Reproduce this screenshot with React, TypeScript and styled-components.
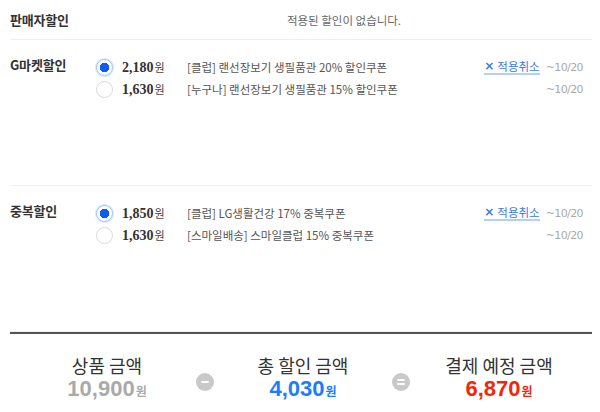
import styled, { createGlobalStyle } from 'styled-components';

const GlobalStyle = createGlobalStyle`
  body {
    margin: 0;
    background: #fff;
    font-family: "Noto Sans CJK KR", "Noto Sans", sans-serif;
    color: #333;
  }
`;

const Wrapper = styled.div`
  width: 582px;
  padding: 0 8px 0 10px;
`;

const HeaderRow = styled.div`
  display: flex;
  align-items: center;
  height: 39px;
  border-bottom: 1px solid #eeeeee;
`;

const Label = styled.div`
  width: 86px;
  flex-shrink: 0;
  font-size: 13px;
  font-weight: 700;
  line-height: 18px;
  color: #333;
  letter-spacing: -0.2px;
`;

const EmptyMessage = styled.div`
  flex: 1;
  text-align: center;
  font-size: 11.5px;
  color: #666;
  margin-top: 1px;
`;

const Section = styled.div`
  display: flex;
  height: 146px;
  padding-top: 16px;
  box-sizing: border-box;
  border-bottom: 1px solid #f0f0f0;
`;

const Rows = styled.div`
  flex: 1;
  display: flex;
  flex-direction: column;
`;

const Row = styled.div`
  display: grid;
  grid-template-columns: 26px 65px 1fr auto auto;
  align-items: center;
  height: 22px;
  padding-right: 9px;
`;

const Radio = styled.span<{ checked?: boolean }>`
  width: 17px;
  height: 17px;
  box-sizing: border-box;
  border-radius: 50%;
  border: 1px solid ${(p) => (p.checked ? '#9cc0ff' : '#d9d9d9')};
  background: ${(p) => (p.checked ? 'radial-gradient(circle, #0a5cff 0 4.5px, #fff 5px)' : '#fff')};
  box-shadow: ${(p) => (p.checked ? '0 0 0 1px #d6e5ff' : 'none')};
`;

const Price = styled.span`
  font-family: "Liberation Serif", serif;
  font-weight: 700;
  font-size: 14px;
  color: #333;

  small {
    font-family: "Noto Sans CJK KR", sans-serif;
    font-weight: 400;
    font-size: 11px;
    color: #444;
    margin-left: 1px;
  }
`;

const Coupon = styled.span`
  font-size: 11.5px;
  color: #555;
  white-space: nowrap;
`;

const Cancel = styled.a`
  display: inline-flex;
  align-items: center;
  gap: 3px;
  font-size: 11.5px;
  color: #3a7be6;
  line-height: 14px;
  border-bottom: 2px solid #b4cff8;
  margin-right: 6px;
  cursor: pointer;

  b {
    font-size: 12px;
    font-family: "DejaVu Sans", sans-serif;
  }
`;

const DateText = styled.span`
  grid-column: 5;
  font-family: "DejaVu Sans", sans-serif;
  font-size: 11px;
  color: #aaa;
  letter-spacing: -0.6px;
`;

const Summary = styled.div`
  border-top: 2px solid #555;
  padding: 19px 0 0 8px;
  display: grid;
  grid-template-columns: 178px 18px 178px 18px 178px;
  align-items: center;
`;

const SummaryItem = styled.div`
  display: flex;
  flex-direction: column;
  align-items: center;
`;

const SummaryTitle = styled.div`
  font-size: 18px;
  line-height: 24px;
  color: #333;
`;

const Amount = styled.div<{ color: string }>`
  font-family: "Liberation Sans", Arial, sans-serif;
  font-weight: 700;
  font-size: 22px;
  line-height: 24px;
  color: ${(p) => p.color};

  small {
    font-family: "Noto Sans CJK KR", sans-serif;
    font-size: 12px;
    margin-left: 1px;
  }
`;

const Operator = styled.div`
  width: 18px;
  height: 18px;
  border-radius: 50%;
  background: #c9c9cc;
  display: flex;
  flex-direction: column;
  align-items: center;
  justify-content: center;
  gap: 2px;
  margin-top: 8px;
`;

const Bar = styled.span`
  width: 8px;
  height: 2px;
  background: #fff;
  border-radius: 1px;
`;

interface Discount {
  amount: string;
  text: string;
  checked?: boolean;
}

const DiscountRow = ({ amount, text, checked }: Discount) => (
  <Row>
    <Radio checked={checked} />
    <Price>
      {amount}
      <small>원</small>
    </Price>
    <Coupon>{text}</Coupon>
    {checked ? (
      <Cancel>
        <b>×</b>적용취소
      </Cancel>
    ) : (
      <span />
    )}
    <DateText>~10/20</DateText>
  </Row>
);

const gmarket: Discount[] = [
  { amount: '2,180', text: '[클럽] 랜선장보기 생필품관 20% 할인쿠폰', checked: true },
  { amount: '1,630', text: '[누구나] 랜선장보기 생필품관 15% 할인쿠폰' },
];

const duplicate: Discount[] = [
  { amount: '1,850', text: '[클럽] LG생활건강 17% 중복쿠폰', checked: true },
  { amount: '1,630', text: '[스마일배송] 스마일클럽 15% 중복쿠폰' },
];

export default function App() {
  return (
    <Wrapper>
      <GlobalStyle />
      <HeaderRow>
        <Label>판매자할인</Label>
        <EmptyMessage>적용된 할인이 없습니다.</EmptyMessage>
      </HeaderRow>

      <Section>
        <Label>G마켓할인</Label>
        <Rows>
          {gmarket.map((d) => (
            <DiscountRow key={d.text} {...d} />
          ))}
        </Rows>
      </Section>

      <Section>
        <Label>중복할인</Label>
        <Rows>
          {duplicate.map((d) => (
            <DiscountRow key={d.text} {...d} />
          ))}
        </Rows>
      </Section>

      <Summary>
        <SummaryItem>
          <SummaryTitle>상품 금액</SummaryTitle>
          <Amount color="#aaaaaa">
            10,900<small>원</small>
          </Amount>
        </SummaryItem>
        <Operator>
          <Bar />
        </Operator>
        <SummaryItem>
          <SummaryTitle>총 할인 금액</SummaryTitle>
          <Amount color="#1a7cff">
            4,030<small>원</small>
          </Amount>
        </SummaryItem>
        <Operator>
          <Bar />
          <Bar />
        </Operator>
        <SummaryItem>
          <SummaryTitle>결제 예정 금액</SummaryTitle>
          <Amount color="#f0270c">
            6,870<small>원</small>
          </Amount>
        </SummaryItem>
      </Summary>
    </Wrapper>
  );
}
